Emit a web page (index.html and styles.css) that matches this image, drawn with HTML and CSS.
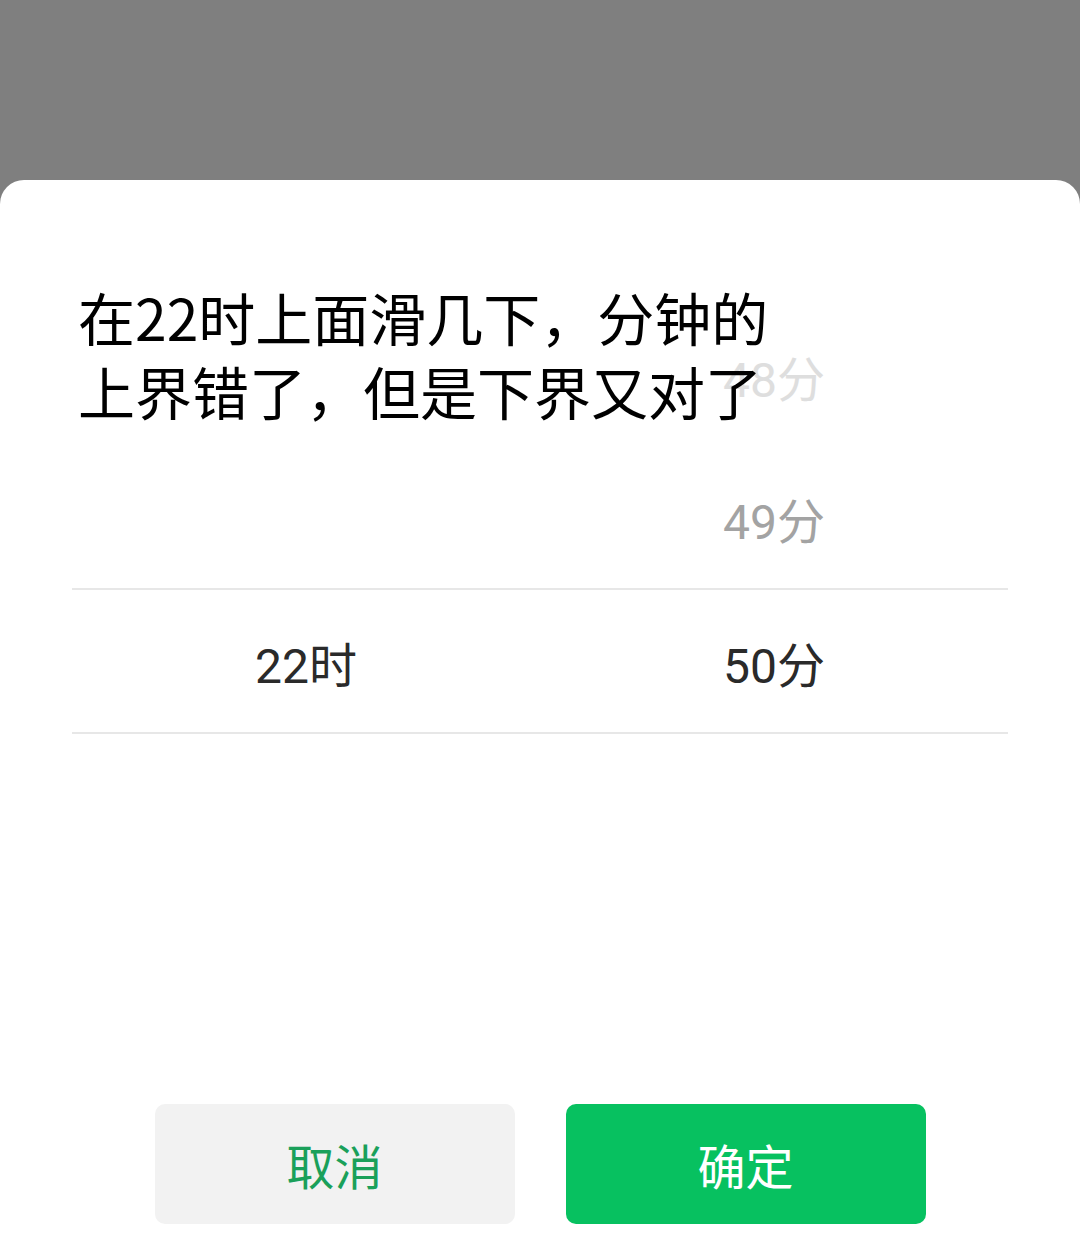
FILE: index.html
```html
<!DOCTYPE html>
<html lang="zh-CN">
<head>
  <meta charset="UTF-8">
  <meta name="viewport" content="width=device-width, initial-scale=1.0">
  <title>选择时间</title>
  <link rel="stylesheet" href="styles.css">
</head>
<body>

  <!-- Dimmed page behind the sheet -->
  <div class="mask"></div>

  <!-- Bottom sheet with time picker -->
  <section class="sheet">
    <p class="note">在22时上面滑几下，分钟的<br>上界错了，但是下界又对了</p>

    <div class="picker">
      <div class="row">
        <span class="cell"></span>
        <span class="cell far">48分</span>
      </div>
      <div class="row">
        <span class="cell"></span>
        <span class="cell near">49分</span>
      </div>
      <div class="row current">
        <span class="cell">22时</span>
        <span class="cell">50分</span>
      </div>
    </div>

    <div class="actions">
      <button class="btn btn-cancel">取消</button>
      <button class="btn btn-ok">确定</button>
    </div>
  </section>

</body>
</html>
```

FILE: styles.css
```css
/* Global Styles */
body {
  margin: 0;
  padding: 0;
  background-color: #7f7f7f;
  font-family: "Noto Sans CJK SC", sans-serif;
}

.mask {
  height: 180px;
}

.sheet {
  position: relative;
  height: 1065px;
  background-color: #fff;
  border-radius: 24px 24px 0 0;
  display: flex;
  flex-direction: column;
}

/* Annotation written over the screenshot */
.note {
  position: absolute;
  top: 99px;
  left: 78px;
  margin: 0;
  font-size: 57px;
  line-height: 74px;
  color: #000;
  z-index: 2;
}

/* Picker */
.picker {
  margin: 0 72px;
  padding-top: 124px;
  font-family: Roboto, "Noto Sans CJK SC", sans-serif;
  font-size: 48px;
  color: #2a2a2a;
}

.row {
  display: grid;
  grid-template-columns: 1fr 1fr;
  height: 142px;
  align-items: center;
  text-align: center;
}

.row.current {
  border-top: 2px solid #e7e7e7;
  border-bottom: 2px solid #e7e7e7;
}

.cell {
  padding-top: 2px;
}

.far {
  color: #dedede;
}

.near {
  color: #a3a3a3;
}

/* Buttons */
.actions {
  margin-top: auto;
  margin-bottom: 21px;
  display: flex;
  justify-content: center;
  gap: 51px;
}

.btn {
  width: 360px;
  height: 120px;
  border: none;
  border-radius: 10px;
  font-family: "Noto Sans CJK SC", sans-serif;
  font-size: 48px;
  font-weight: 400;
  cursor: pointer;
}

.btn-cancel {
  background-color: #f2f2f2;
  color: #1aa05a;
}

.btn-ok {
  background-color: #07c160;
  color: #fff;
}
```
